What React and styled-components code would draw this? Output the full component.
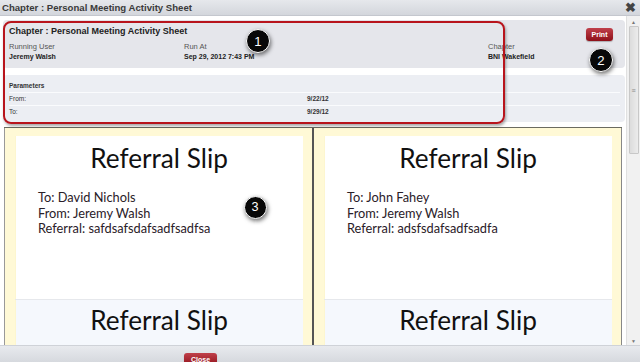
import React from "react";
import styled, { createGlobalStyle } from "styled-components";

const GlobalStyle = createGlobalStyle`
  html, body {
    margin: 0;
    padding: 0;
    width: 640px;
    height: 362px;
    overflow: hidden;
    background: #fff;
  }
  * { box-sizing: border-box; }
`;

const Window = styled.div`
  position: relative;
  width: 640px;
  height: 362px;
  display: flex;
  flex-direction: column;
  font-family: "Liberation Sans", Arial, sans-serif;
  color: #333;
  overflow: hidden;
`;

const TitleBar = styled.div`
  height: 16px;
  flex: none;
  display: flex;
  align-items: center;
  justify-content: space-between;
  padding: 0 4px 0 2px;
  background: linear-gradient(#e6e8ec, #d3d6dc);
  border-bottom: 1px solid #c4c7ce;
  font-size: 9.6px;
  font-weight: bold;
  color: #3a3a3a;
`;

const CloseX = styled.span`
  font-size: 13px;
  font-weight: bold;
  color: #444;
  line-height: 1;
`;

const Body = styled.div`
  flex: 1;
  display: flex;
  min-height: 0;
`;

const Content = styled.div`
  position: relative;
  flex: 1;
  padding: 4px 1px 0 3px;
  overflow: hidden;
`;

const HeaderPanel = styled.div`
  height: 48px;
  background: #e5e6eb;
  border-radius: 4px;
  padding: 5px 12px 0 6px;
  margin-bottom: 7px;
`;

const ParamPanel = styled.div`
  height: 47px;
  background: #eceef3;
  border-radius: 4px;
  padding: 7px 5px 0 6px;
  margin-bottom: 5px;
`;

const PanelHead = styled.div`
  display: flex;
  justify-content: space-between;
  align-items: flex-start;
  height: 12px;
`;

const Heading = styled.h1`
  margin: 0;
  font-size: 9px;
  line-height: 13px;
  font-weight: bold;
  color: #222;
`;

const RedButton = styled.button`
  border: none;
  border-radius: 3px;
  background: linear-gradient(#c0404a, #8e1019);
  color: #fff;
  font-family: "Liberation Sans", Arial, sans-serif;
  font-weight: bold;
  font-size: 7px;
  padding: 0;
  margin-top: ${(p) => p.$top || 0}px;
  width: ${(p) => p.$w}px;
  height: 13px;
  box-shadow: 0 1px 1px rgba(0, 0, 0, 0.25);
`;

const InfoGrid = styled.div`
  display: grid;
  grid-template-columns: 175px 304px 1fr;
  margin-top: 5px;
`;

const Label = styled.div`
  font-size: 7.5px;
  color: #555;
  line-height: 10px;
`;

const Value = styled.div`
  font-size: 7px;
  font-weight: bold;
  color: #222;
  line-height: 10px;
`;

const ParamTitle = styled.div`
  font-size: 6.5px;
  line-height: 8px;
  font-weight: bold;
  color: #333;
  padding-bottom: 2px;
  border-bottom: 1px solid #fafbfd;
`;

const ParamRow = styled.div`
  display: grid;
  grid-template-columns: 298px 1fr;
  font-size: 6.5px;
  line-height: 8px;
  color: #333;
  height: 13px;
  padding-top: 2px;
  border-bottom: ${(p) => (p.$last ? "none" : "1px solid #fafbfd")};
`;

const ParamValue = styled.span`
  font-weight: bold;
`;

const Cards = styled.div`
  display: flex;
  width: 618px;
  margin-left: 1px;
  border-top: 1px solid #6b6b60;
`;

const Card = styled.div`
  flex: 1;
  background: #fff9d6;
  border-left: ${(p) => (p.$first ? "1px solid #999" : "2px solid #555")};
  border-right: ${(p) => (p.$last ? "1px solid #888" : "none")};
  padding: 8px 9px 0 10px;
  height: 230px;
`;

const Slip = styled.div`
  background: ${(p) => (p.$alt ? "#f5f8fd" : "#fff")};
  border-top: ${(p) => (p.$alt ? "1px solid #e6e8ec" : "none")};
  height: ${(p) => (p.$alt ? "60px" : "163px")};
  padding: ${(p) => (p.$alt ? "5px" : "7px")} 0 0 23px;
  font-family: Lato, "Open Sans", sans-serif;
  color: #1e1e1e;
  box-shadow: inset 9px 0 0 -8px #fdf6cf;
`;

const SlipTitle = styled.div`
  font-size: 26.2px;
  text-align: center;
  margin: 0 0 0 -23px;
  line-height: 30px;
  color: #111;
`;

const SlipLines = styled.div`
  margin-top: 17px;
  font-size: 12.8px;
  line-height: 15.5px;
  color: #2a2028;
`;

const ScrollBar = styled.div`
  width: 14px;
  flex: none;
  background: #f1f1f1;
  border-left: 1px solid #e0e0e0;
  display: flex;
  flex-direction: column;
  align-items: center;
  padding-top: 2px;
`;

const Arrow = styled.div`
  font-size: 5px;
  color: #777;
  height: 8px;
  line-height: 8px;
`;

const Thumb = styled.div`
  width: 10px;
  height: 128px;
  background: linear-gradient(90deg, #dcdcdc, #ececec);
  border: 1px solid #c8c8c8;
  border-radius: 1px;
  display: flex;
  align-items: center;
  justify-content: center;
  font-size: 7px;
  color: #888;
`;

const Track = styled.div`
  flex: 1;
`;

const Footer = styled.div`
  height: 17px;
  flex: none;
  background: linear-gradient(#e8eaee, #d6d9de);
  border-top: 1px solid #cfd2d8;
  padding: 2px 0 0 184px;
`;

const Annotation = styled.div`
  position: absolute;
  left: 3px;
  top: 5px;
  width: 502px;
  height: 103px;
  border: 2.5px solid #b8141c;
  border-radius: 8px;
  box-shadow: 1px 2px 3px rgba(0, 0, 0, 0.35);
  pointer-events: none;
`;

const Badge = styled.div`
  position: absolute;
  left: ${(p) => p.$x - p.$size / 2}px;
  top: ${(p) => p.$y - p.$size / 2}px;
  width: ${(p) => p.$size}px;
  height: ${(p) => p.$size}px;
  border-radius: 50%;
  background: #080808;
  border: 1.5px solid #fff;
  box-shadow: 1px 2px 4px rgba(0, 0, 0, 0.55);
  color: #fff;
  font-family: "Liberation Sans", Arial, sans-serif;
  font-size: ${(p) => p.$size * 0.55}px;
  display: flex;
  align-items: center;
  justify-content: center;
`;

const slips = [
  { to: "David Nichols", from: "Jeremy Walsh", referral: "safdsafsdafsadfsadfsa" },
  { to: "John Fahey", from: "Jeremy Walsh", referral: "adsfsdafsadfsadfa" },
];

export default function App() {
  return (
    <>
      <GlobalStyle />
      <Window>
        <TitleBar>
          <span>Chapter : Personal Meeting Activity Sheet</span>
          <CloseX>✖</CloseX>
        </TitleBar>
        <Body>
          <Content>
            <HeaderPanel>
              <PanelHead>
                <Heading>Chapter : Personal Meeting Activity Sheet</Heading>
                <RedButton $w={27} $top={3}>Print</RedButton>
              </PanelHead>
              <InfoGrid>
                <div>
                  <Label>Running User</Label>
                  <Value>Jeremy Walsh</Value>
                </div>
                <div>
                  <Label>Run At</Label>
                  <Value>Sep 29, 2012 7:43 PM</Value>
                </div>
                <div>
                  <Label>Chapter</Label>
                  <Value>BNI Wakefield</Value>
                </div>
              </InfoGrid>
            </HeaderPanel>
            <ParamPanel>
              <ParamTitle>Parameters</ParamTitle>
              <ParamRow>
                <span>From:</span>
                <ParamValue>9/22/12</ParamValue>
              </ParamRow>
              <ParamRow $last>
                <span>To:</span>
                <ParamValue>9/29/12</ParamValue>
              </ParamRow>
            </ParamPanel>
            <Cards>
              {slips.map((s, i) => (
                <Card key={i} $first={i === 0} $last={i === slips.length - 1}>
                  <Slip>
                    <SlipTitle>Referral Slip</SlipTitle>
                    <SlipLines>
                      <div>To: {s.to}</div>
                      <div>From: {s.from}</div>
                      <div>Referral: {s.referral}</div>
                    </SlipLines>
                  </Slip>
                  <Slip $alt>
                    <SlipTitle>Referral Slip</SlipTitle>
                  </Slip>
                </Card>
              ))}
            </Cards>
            <Annotation />
            <Badge $x={258} $y={25} $size={24}>1</Badge>
            <Badge $x={601} $y={44} $size={24}>2</Badge>
            <Badge $x={255} $y={191} $size={23}>3</Badge>
          </Content>
          <ScrollBar>
            <Arrow>▲</Arrow>
            <Thumb>≡</Thumb>
            <Track />
            <Arrow>▼</Arrow>
          </ScrollBar>
        </Body>
        <Footer>
          <RedButton $w={33}>Close</RedButton>
        </Footer>
      </Window>
    </>
  );
}
